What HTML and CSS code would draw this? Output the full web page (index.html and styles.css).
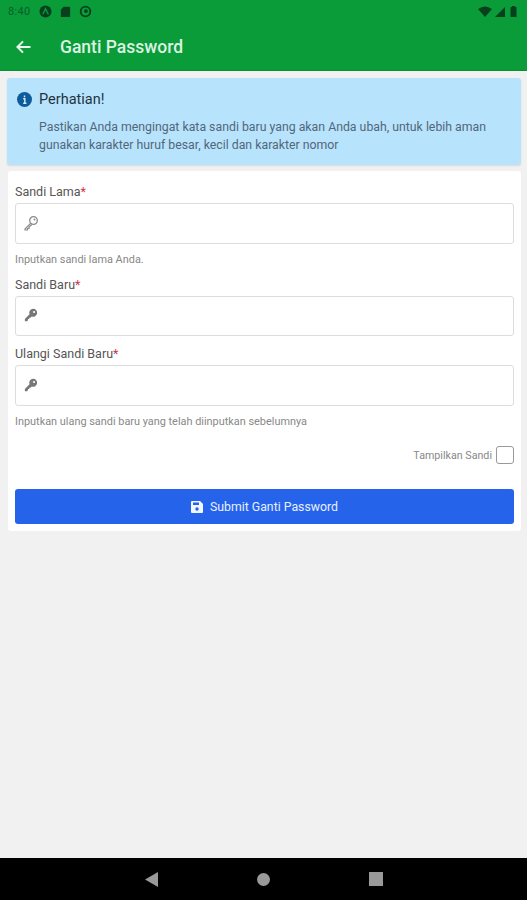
FILE: index.html
```html
<!DOCTYPE html>
<html lang="en">
  <head>
    <meta charset="UTF-8" />
    <meta name="viewport" content="width=device-width, initial-scale=1.0" />
    <title>Ganti Password</title>
    <link rel="stylesheet" href="styles.css">
  </head>
  <body>
    <div class="screen">
      <div class="status-bar">
        <div class="status-left">
          <span class="status-time">8:40</span>
          <svg class="status-icon" viewBox="0 0 14 14"><circle cx="7" cy="7" r="6.5" fill="#06401c"/><path d="M4 10 7 4l3 6" fill="none" stroke="#0b9c3a" stroke-width="1.5"/></svg>
          <svg class="status-icon" viewBox="0 0 14 14"><path d="M5 2h6a1 1 0 0 1 1 1v9a1 1 0 0 1-1 1H3a1 1 0 0 1-1-1V5z" fill="#06401c"/></svg>
          <svg class="status-icon" viewBox="0 0 14 14"><circle cx="7" cy="7" r="5.200" fill="none" stroke="#06401c" stroke-width="2"/><circle cx="7.500" cy="6.500" r="2" fill="#06401c"/></svg>
        </div>
        <div class="status-right">
          <svg class="wifi" viewBox="0 0 14 11"><path d="M0 3Q7-2 14 3L7 11z" fill="#06401c"/></svg>
          <svg class="signal" viewBox="0 0 10 10"><path d="M10 0v10H0z" fill="#06401c"/></svg>
          <svg class="battery" viewBox="0 0 7 11"><path d="M2 1V0h3v1h1.500v10H.5V1z" fill="#06401c"/></svg>
        </div>
      </div>

      <header class="app-bar">
        <svg class="back-icon" viewBox="0 0 16 14"><path d="M7.500 1 1.500 7l6 6M2 7h13.500" fill="none" stroke="#e9f7ec" stroke-width="2.200"/></svg>
        <h1>Ganti Password</h1>
      </header>

      <main class="content">
        <section class="notice">
          <div class="notice-title">
            <svg class="info-icon" viewBox="0 0 14 14"><circle cx="7" cy="7" r="7" fill="#0f5c9c"/><path d="M7 3.200v1.600M5.800 6.300H7.300v4M5.800 10.500h3" fill="none" stroke="#d8eefc" stroke-width="1.300"/></svg>
            <span>Perhatian!</span>
          </div>
          <p>Pastikan Anda mengingat kata sandi baru yang akan Anda ubah, untuk lebih aman gunakan karakter huruf besar, kecil dan karakter nomor</p>
        </section>

        <form class="card">
          <label class="field-label">Sandi Lama<span class="req">*</span></label>
          <div class="input-box tall">
            <svg class="key-icon key-outline" viewBox="0 0 16 16"><circle cx="10.500" cy="5.500" r="3.800" fill="none" stroke="#8a8a8a" stroke-width="1.300"/><circle cx="11.500" cy="4.500" r="1" fill="#8a8a8a"/><path d="M7.800 8.200 2 14v1h2.500v-1.500H6V12l2.800-2.500" fill="none" stroke="#8a8a8a" stroke-width="1.200"/></svg>
          </div>
          <p class="hint first-hint">Inputkan sandi lama Anda.</p>

          <label class="field-label">Sandi Baru<span class="req">*</span></label>
          <div class="input-box">
            <svg class="key-icon" viewBox="0 0 16 16"><path d="M10.500 1a4.500 4.500 0 1 1-1.600 8.700L7.500 11H6v1.500H4.500V14L3.500 15H1v-2.500l5.300-5.300A4.500 4.500 0 0 1 10.500 1z" fill="#777"/><circle cx="11.500" cy="4.500" r="1.200" fill="#fff"/></svg>
          </div>

          <label class="field-label second-label">Ulangi Sandi Baru<span class="req">*</span></label>
          <div class="input-box tall">
            <svg class="key-icon" viewBox="0 0 16 16"><path d="M10.500 1a4.500 4.500 0 1 1-1.600 8.700L7.500 11H6v1.500H4.500V14L3.500 15H1v-2.500l5.300-5.300A4.500 4.500 0 0 1 10.500 1z" fill="#777"/><circle cx="11.500" cy="4.500" r="1.200" fill="#fff"/></svg>
          </div>
          <p class="hint last-hint">Inputkan ulang sandi baru yang telah diinputkan sebelumnya</p>

          <div class="show-row">
            <span>Tampilkan Sandi</span>
            <span class="checkbox"></span>
          </div>

          <button type="button" class="submit-btn">
            <svg class="save-icon" viewBox="0 0 12 12"><path d="M1 0h8l3 3v8a1 1 0 0 1-1 1H1a1 1 0 0 1-1-1V1a1 1 0 0 1 1-1z" fill="#f2f6ff"/><path d="M2 1.500h6v2.500H2z" fill="#2563eb"/><circle cx="6" cy="8" r="1.700" fill="#2563eb"/></svg>
            Submit Ganti Password
          </button>
        </form>
      </main>

      <nav class="nav-bar">
        <svg class="nav-back" viewBox="0 0 13 15"><path d="M13 0v15L0 7.500z" fill="#999"/></svg>
        <span class="nav-home"></span>
        <span class="nav-recent"></span>
      </nav>
    </div>
  </body>
</html>
```

FILE: styles.css
```css
* {
  box-sizing: border-box;
}
html,
body {
  margin: 0;
  padding: 0;
}
body {
  font-family: Roboto, "Liberation Sans", sans-serif;
  background-color: #f1f1f1;
}
.screen {
  display: flex;
  flex-direction: column;
  height: 900px;
}
.status-bar {
  display: flex;
  justify-content: space-between;
  align-items: center;
  height: 23px;
  padding: 0 8px;
  background-color: #0b9c3a;
}
.status-left {
  display: flex;
  align-items: center;
  gap: 7px;
}
.status-time {
  font-size: 11px;
  color: #06602a;
  letter-spacing: 0.3px;
  margin-right: 2px;
}
.status-icon {
  width: 13px;
  height: 13px;
}
.status-right {
  display: flex;
  align-items: center;
  gap: 3px;
  padding-right: 2px;
}
.wifi {
  width: 14px;
  height: 11px;
}
.signal {
  width: 10px;
  height: 10px;
}
.battery {
  width: 7px;
  height: 11px;
  margin-left: 2px;
}
.app-bar {
  display: flex;
  align-items: center;
  height: 48px;
  padding: 0 16px;
  background-color: #0b9c3a;
  border-bottom: 1px solid #0a8f35;
}
.back-icon {
  width: 15px;
  height: 14px;
}
.app-bar h1 {
  margin: 0 0 0 29px;
  font-size: 17.500px;
  font-weight: 500;
  color: #dcf2e2;
}
.content {
  flex: 1;
  padding: 7px 6px 0 7px;
}
.notice {
  height: 87px;
  padding: 13px 10px 0;
  background-color: #b8e3fd;
  border-radius: 3px;
  box-shadow: 0 1px 2px rgba(0, 0, 0, 0.1);
}
.notice-title {
  display: flex;
  align-items: center;
  gap: 7px;
  font-size: 14.500px;
  color: #22343f;
}
.info-icon {
  width: 15px;
  height: 15px;
}
.notice p {
  margin: 10px 0 0 22px;
  font-size: 12.300px;
  line-height: 18px;
  color: #52677a;
}
.card {
  margin: 6px 0 0 1px;
  height: 360px;
  padding: 13px 7px 0;
  background-color: #fff;
  border-radius: 3px;
}
.field-label {
  display: block;
  font-size: 12.500px;
  line-height: 15px;
  color: #555;
}
.req {
  color: #d3344b;
}
.input-box {
  display: flex;
  align-items: center;
  height: 40px;
  margin-top: 4px;
  padding-left: 8px;
  padding-bottom: 2px;
  border: 1px solid #ddd;
  border-radius: 3px;
  background-color: #fff;
}
.input-box.tall {
  height: 41px;
}
.key-icon {
  width: 14px;
  height: 14px;
}
.key-outline {
  width: 16px;
  height: 16px;
  margin-left: -1px;
}
.hint {
  margin: 0;
  font-size: 10.900px;
  line-height: 13px;
  color: #888;
}
.first-hint {
  margin-top: 9px;
  margin-bottom: 11px;
}
.second-label {
  margin-top: 10px;
}
.last-hint {
  margin-top: 9px;
}
.show-row {
  display: flex;
  justify-content: flex-end;
  align-items: center;
  gap: 4px;
  margin-top: 18px;
  font-size: 10.700px;
  color: #888;
}
.checkbox {
  width: 18px;
  height: 18px;
  border: 1.500px solid #999;
  border-radius: 3px;
}
.submit-btn {
  display: flex;
  justify-content: center;
  align-items: center;
  gap: 7px;
  width: 100%;
  height: 35px;
  margin-top: 25px;
  padding: 0;
  font-family: inherit;
  font-size: 12.300px;
  color: #e8f0ff;
  background-color: #2563eb;
  border: none;
  border-radius: 3px;
  cursor: pointer;
}
.save-icon {
  width: 12px;
  height: 12px;
}
.nav-bar {
  display: flex;
  justify-content: space-between;
  align-items: center;
  height: 42px;
  padding: 0 144px 0 145px;
  background-color: #000;
}
.nav-back {
  width: 13px;
  height: 15px;
}
.nav-home {
  width: 13px;
  height: 13px;
  border-radius: 50%;
  background-color: #999;
}
.nav-recent {
  width: 14px;
  height: 14px;
  background-color: #999;
}
```
